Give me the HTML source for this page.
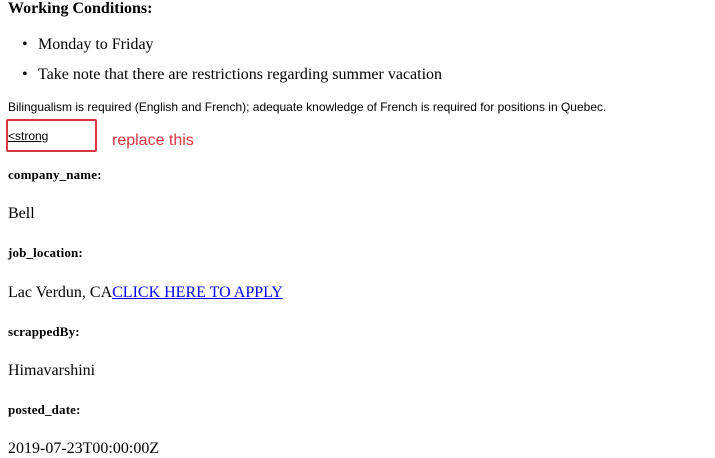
<!DOCTYPE html>
<html><head><style>
body{margin:0;width:715px;height:456px;overflow:hidden;background:#fff;font-family:"Liberation Serif",serif;color:#000;position:relative}
.a{position:absolute;white-space:nowrap}
.h{font-weight:bold;font-size:13px;letter-spacing:0.15px}
.t{font-size:16px}
</style></head><body>
<div class="a" style="left:8px;top:0px;font-size:16px;font-weight:bold">Working Conditions:</div>
<div class="a t" style="left:22px;top:36px">•</div>
<div class="a t" style="left:38px;top:36px">Monday to Friday</div>
<div class="a t" style="left:22px;top:66px">•</div>
<div class="a t" style="left:38px;top:66px">Take note that there are restrictions regarding summer vacation</div>
<div class="a" style="left:8px;top:100px;font-family:'Liberation Sans',sans-serif;font-size:12px">Bilingualism is required (English and French); adequate knowledge of French is required for positions in Quebec.</div>
<div class="a" style="left:6px;top:119px;width:87px;height:29px;border:2px solid #d9363e;border-radius:2px"></div>
<div class="a" style="left:8px;top:129px;font-family:'Liberation Sans',sans-serif;font-size:12px;text-decoration:underline">&lt;strong</div>
<div class="a" style="left:112px;top:132px;font-family:'Liberation Sans',sans-serif;font-size:16px;color:#d9363e">replace this</div>
<div class="a h" style="left:8px;top:167px">company_name:</div>
<div class="a t" style="left:8px;top:205px">Bell</div>
<div class="a h" style="left:8px;top:245px">job_location:</div>
<div class="a t" style="left:8px;top:284px">Lac Verdun, CA<span style="color:#00e;text-decoration:underline">CLICK HERE TO APPLY</span></div>
<div class="a h" style="left:8px;top:324px">scrappedBy:</div>
<div class="a t" style="left:8px;top:362px">Himavarshini</div>
<div class="a h" style="left:8px;top:402px">posted_date:</div>
<div class="a t" style="left:8px;top:440px">2019-07-23T00:00:00Z</div>
</body></html>
